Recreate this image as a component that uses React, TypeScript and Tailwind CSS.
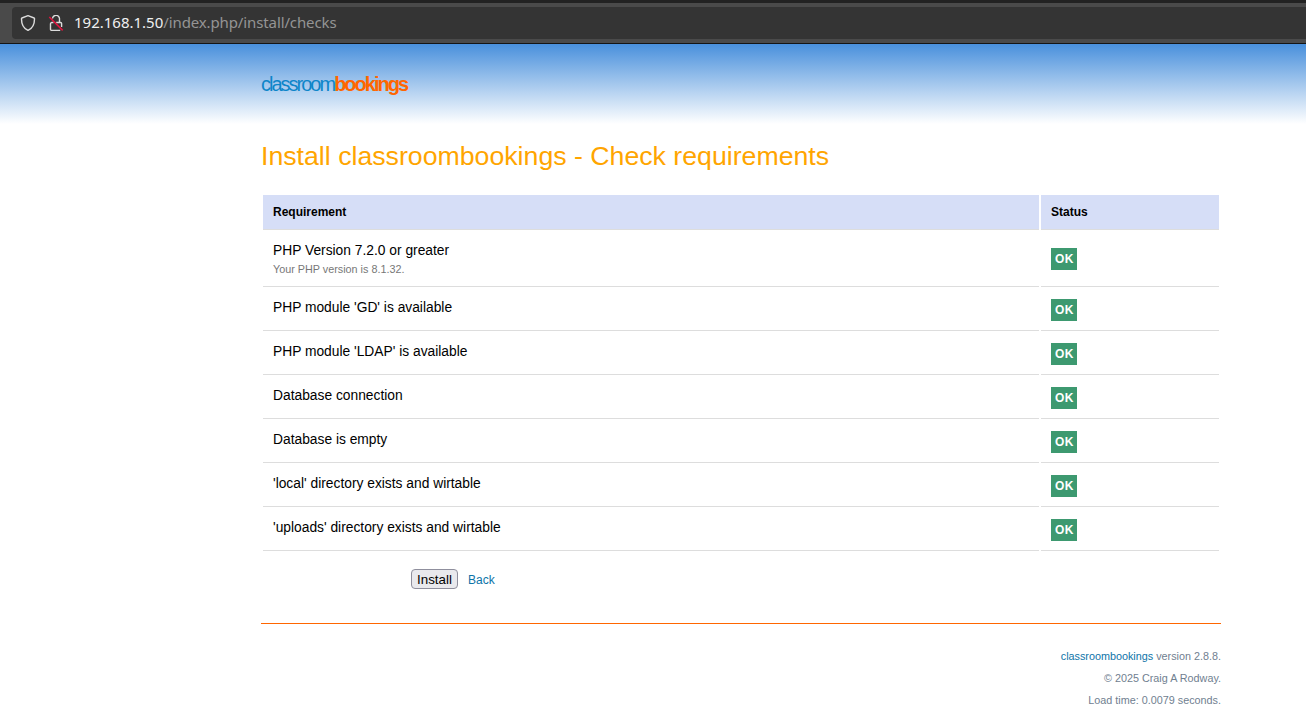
import type { ReactNode } from "react";

const checks: { label: string; note?: string }[] = [
  { label: "PHP Version 7.2.0 or greater", note: "Your PHP version is 8.1.32." },
  { label: "PHP module 'GD' is available" },
  { label: "PHP module 'LDAP' is available" },
  { label: "Database connection" },
  { label: "Database is empty" },
  { label: "'local' directory exists and wirtable" },
  { label: "'uploads' directory exists and wirtable" },
];

function ShieldIcon() {
  return (
    <svg className="h-4 w-4 shrink-0" viewBox="0 0 16 16" fill="none" stroke="#dcdcdc" strokeWidth="1.4" strokeLinejoin="round">
      <path d="M8 .7 14.1 3a.6.6 0 0 1 .4.6C14.6 9 12.6 13.4 8 15.4 3.4 13.4 1.4 9 1.5 3.6a.6.6 0 0 1 .4-.6Z" />
    </svg>
  );
}

function InsecureIcon() {
  return (
    <svg className="h-4 w-4 shrink-0" viewBox="0 0 16 16" fill="none">
      <path
        d="M4.5 3.5A3.5 3.5 0 0 1 11.5 4.3V7.500h1.100a1 1 0 0 1 1 1v3.500M8.200 7.500h3.300M5.500 7.500H3.800a1.300 1.300 0 0 0-1.300 1.300v5.400a1.200 1.200 0 0 0 1.200 1.200h8.500"
        stroke="#dcdcdc"
        strokeWidth="1.400"
      />
      <path d="m1.300 2 13.400 13.400" stroke="#e2143f" strokeWidth="1.500" />
    </svg>
  );
}

function AddressBar() {
  return (
    <div className="h-11 border-t-[3px] border-b border-t-[#222222] border-b-[#151515] bg-[#4a4a4a] pt-1 pl-3">
      <div className="flex h-8 items-center rounded-l-[4px] bg-[#343434] pl-2">
        <ShieldIcon />
        <div className="w-3" />
        <InsecureIcon />
        <div className="mb-[2px] ml-[10px] font-['Noto_Sans','Open_Sans',sans-serif] text-[15px] leading-[30px] whitespace-nowrap text-[#949494]">
          <span className="text-[#f0f0f0]">192.168.1.50</span>
          <span className="tracking-[-0.12px]">/index.php/install/checks</span>
        </div>
      </div>
    </div>
  );
}

function Row({ children, status }: { children: ReactNode; status: ReactNode }) {
  return (
    <div className="grid grid-cols-[776px_178px] gap-[2px]">
      <div className="border-b border-[#dddddd] px-[10px]">{children}</div>
      <div className="flex flex-col items-start justify-center border-b border-[#dddddd] px-[10px]">{status}</div>
    </div>
  );
}

export default function App() {
  return (
    <div className="h-[725px] overflow-hidden bg-white font-['Liberation_Sans',Arial,sans-serif] text-black">
      <AddressBar />
      <header className="h-20 bg-linear-to-b/srgb from-[#4990dc] to-white pt-[28px] pl-[261px]">
        <div className="text-[20px] leading-6 tracking-[-2px] text-[#0d85c9]">
          classroom<span className="font-bold text-[#ff6600]">bookings</span>
        </div>
      </header>
      <main className="ml-[261px] w-[960px]">
        <h1 className="pt-4 text-[26.69px] leading-8 text-[#ffa500]">Install classroombookings - Check requirements</h1>
        <div className="mx-[2px] mt-[23px]">
          <div className="grid h-[35px] grid-cols-[776px_178px] gap-[2px] text-xs leading-[34px] font-bold">
            <div className="border-b border-[#dddddd] bg-[#d6def7] px-[10px]">Requirement</div>
            <div className="border-b border-[#dddddd] bg-[#d6def7] px-[10px]">Status</div>
          </div>
          {checks.map((check) => (
            <Row
              key={check.label}
              status={
                <div className={`h-[22px] w-[26px] bg-[#3d9970] pl-1 text-[12px] leading-[22px] font-bold tracking-[0.3px] text-white ${check.note ? "mt-[2px]" : "mt-[3px]"}`}>
                  OK
                </div>
              }
            >
              <div className={check.note ? "h-14 pt-[11px]" : "h-[43px] pt-[11px]"}>
                <div className="text-[13.8px] leading-5">{check.label}</div>
                {check.note && <div className="text-[10.8px] leading-4 text-[#777777]">{check.note}</div>}
              </div>
            </Row>
          ))}
        </div>
        <div className="mt-[18px] ml-[150px] flex h-5 items-start gap-[10px]">
          <button className="h-5 w-[47px] rounded-[4px] border border-[#8f8f9d] bg-[#e9e9ed] pt-px text-[13.333px] leading-[18px]">Install</button>
          <a className="pt-px text-xs leading-5 text-[#0d74a8]">Back</a>
        </div>
        <footer className="mt-[34px] border-t border-[#ff6600] pt-[21px] text-right text-[10.8px] leading-[22px] text-[#708090]">
          <p><a className="text-[#0d74a8]">classroombookings</a> version 2.8.8.</p>
          <p>© 2025 Craig A Rodway.</p>
          <p>Load time: 0.0079 seconds.</p>
        </footer>
      </main>
    </div>
  );
}
